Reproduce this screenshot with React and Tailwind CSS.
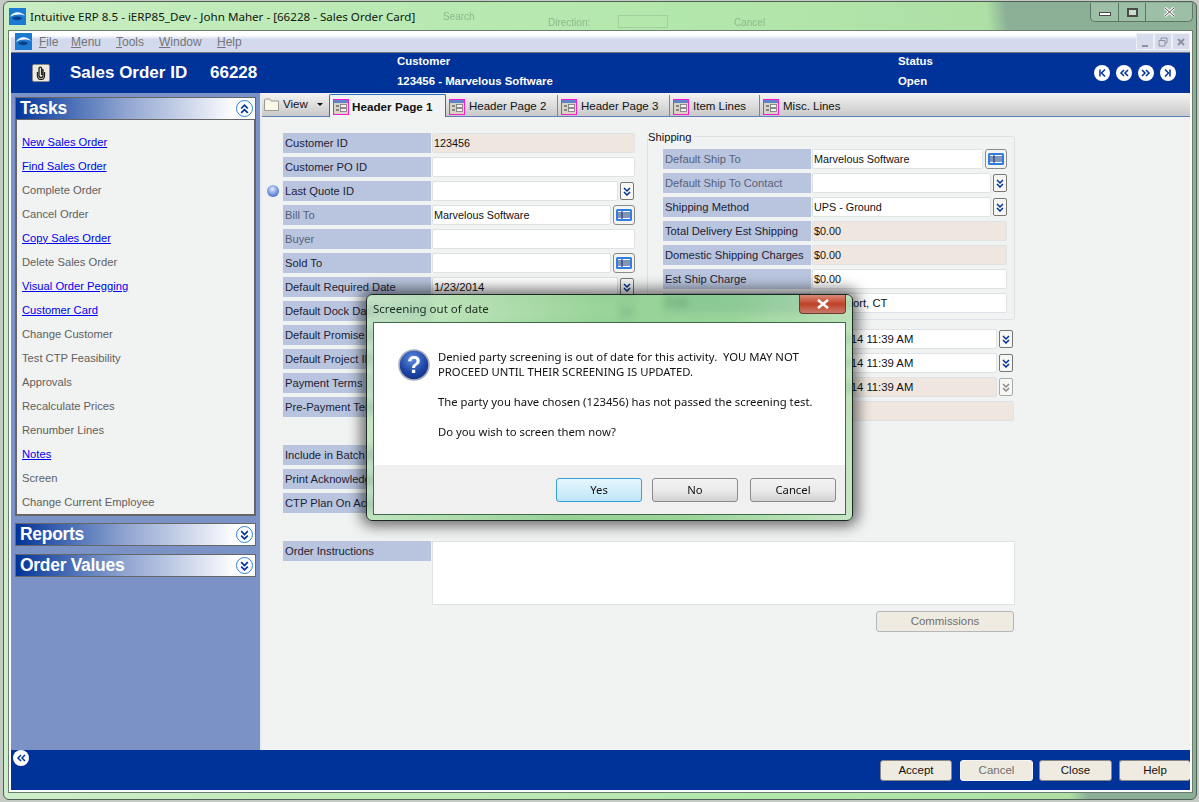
import React from "react";

const tasks = [
  ["New Sales Order", true],
  ["Find Sales Order", true],
  ["Complete Order", false],
  ["Cancel Order", false],
  ["Copy Sales Order", true],
  ["Delete Sales Order", false],
  ["Visual Order Pegging", true],
  ["Customer Card", true],
  ["Change Customer", false],
  ["Test CTP Feasibility", false],
  ["Approvals", false],
  ["Recalculate Prices", false],
  ["Renumber Lines", false],
  ["Notes", true],
  ["Screen", false],
  ["Change Current Employee", false],
];

const Logo = () => (
  <svg width="17" height="17" viewBox="0 0 17 17" className="shrink-0">
    <rect width="17" height="17" fill="#1c7ad2" />
    <path d="M1 9 C4 3 12 3 16 8 C12 6 6 6 1 9 Z" fill="#fff" />
    <path d="M3 10 C6 8 10 8 13 10 C11 13 6 13 3 10 Z" fill="#0b3f86" />
  </svg>
);

// double chevron used all over the app
const Chevrons = ({ dir = "down", color = "#003399", size = 10 }) => {
  const paths = {
    down: ["M2 2 L5 5 L8 2", "M2 6 L5 9 L8 6"],
    up: ["M2 5 L5 2 L8 5", "M2 9 L5 6 L8 9"],
    left: ["M5 2 L2 5 L5 8", "M9 2 L6 5 L9 8"],
    right: ["M1 2 L4 5 L1 8", "M5 2 L8 5 L5 8"],
    first: ["M3 1.5 L3 8.5", "M8 1.5 L4.5 5 L8 8.5"],
    last: ["M7 1.5 L7 8.5", "M2 1.5 L5.5 5 L2 8.5"],
  };
  return (
    <svg width={size} height={size} viewBox="0 0 10 10">
      {paths[dir].map((d) => (
        <path key={d} d={d} fill="none" stroke={color} strokeWidth="1.5" />
      ))}
    </svg>
  );
};

const NavCircle = ({ dir }) => (
  <span className="flex h-[16px] w-[16px] items-center justify-center rounded-full bg-white">
    <Chevrons dir={dir} />
  </span>
);

const SectionCircle = ({ dir }) => (
  <span className="flex h-[17px] w-[17px] items-center justify-center rounded-full border border-[#2f7fd6] bg-white">
    <Chevrons dir={dir} size={11} />
  </span>
);

const TabIcon = () => (
  <svg width="16" height="16" viewBox="0 0 16 16" className="shrink-0">
    <rect x="0.5" y="0.5" width="15" height="15" fill="#d8d5c8" stroke="#ff19d0" />
    <rect x="1" y="1" width="14" height="3" fill="#5f86c8" />
    <path d="M3 7 H6 M3 11 H6" stroke="#6a6a6a" strokeWidth="1.5" />
    <rect x="7.5" y="5.5" width="6" height="3" fill="#f4f4ee" stroke="#777" strokeWidth="0.8" />
    <rect x="7.5" y="9.5" width="6" height="3" fill="#f4f4ee" stroke="#777" strokeWidth="0.8" />
  </svg>
);

const FolderIcon = () => (
  <svg width="16" height="14" viewBox="0 0 16 14" className="shrink-0">
    <path d="M0.5 2 L0.5 12.5 L14.5 12.5 L14.5 3 L7 3 L5.5 1 L1.5 1 Z" fill="#fbf8e8" stroke="#9a9a90" />
  </svg>
);

const LookupButton = () => (
  <button className="flex h-[20px] w-[22px] shrink-0 items-center justify-center rounded-[3px] border border-[#8a8a8a] bg-[#f4f4f0]">
    <svg width="16" height="12" viewBox="0 0 16 12">
      <rect width="16" height="12" rx="1.5" fill="#2f7de0" />
      <rect x="2" y="2" width="12" height="8" fill="#fff" />
      <path d="M2 4 H14 M2 6 H14 M2 8 H14 M6 2 V10" stroke="#0a2a70" strokeWidth="1" />
    </svg>
  </button>
);

const ComboButton = ({ disabled }) => (
  <button
    className={`flex h-[18px] w-[14px] shrink-0 items-center justify-center self-center rounded-[2px] border bg-[#f7f7f4] ${
      disabled ? "border-[#aaaaaa]" : "border-[#777777]"
    }`}
  >
    <Chevrons dir="down" color={disabled ? "#8a8a8a" : "#003399"} />
  </button>
);

const Field = ({ value, tan, date, className = "" }) => (
  <div
    className={`flex h-[20px] items-center overflow-hidden whitespace-nowrap rounded-[2px] border border-[#dfe3e6] pl-[1px] text-[#111] ${
      date ? "text-[11.3px]" : "text-[10.8px]"
    } ${tan ? "bg-[#efe7df]" : "bg-white"} ${className}`}
  >
    {value}
  </div>
);

const widths = {
  left: { none: "w-[203px]", combo: "w-[186px]", "combo-off": "w-[186px]", lookup: "w-[179px]" },
  ship: { none: "w-[195px]", combo: "w-[179px]", lookup: "w-[171px]" },
};

// one label + control row
const Row = ({ label, value, tan, dim, date, kind = "none", set = "left", marker, slot = true }) => (
  <div className="flex h-[20px] items-center">
    {slot && <div className="flex w-[17px] shrink-0 items-center">{marker}</div>}
    <div
      className={`flex h-[20px] w-[148px] shrink-0 items-center overflow-hidden whitespace-nowrap bg-[#b9c5de] pl-[2px] ${
        dim ? "text-[#55607a]" : "text-[#1d2236]"
      }`}
    >
      {label}
    </div>
    <div className="ml-[1px] flex h-[20px] items-center gap-[2px]">
      <Field value={value} tan={tan} date={date} className={widths[set][kind]} />
      {kind === "combo" && <ComboButton />}
      {kind === "combo-off" && <ComboButton disabled />}
      {kind === "lookup" && <LookupButton />}
    </div>
  </div>
);

const Sphere = () => (
  <span className="ml-[1px] block h-[12px] w-[12px] rounded-full bg-[radial-gradient(circle_at_45%_35%,#e4ecff,#6d8fdc_55%,#2f4fa8)]" />
);

const SectionHeader = ({ title, dir }) => (
  <div className="flex h-[23px] items-center justify-between border border-[#666] bg-linear-to-r from-[#003399] via-[#8ea3cf] via-45% to-white to-[92%] pl-[4px] pr-[2px]">
    <span className="text-[17.5px] font-bold tracking-[-0.3px] text-white">{title}</span>
    <SectionCircle dir={dir} />
  </div>
);

const Tab = ({ label, w }) => (
  <div className={`flex h-[22px] items-center gap-[4px] border-r border-[#4a90e2] pl-[3px] text-[11.5px] text-[#111] ${w}`}>
    <TabIcon />
    <span>{label}</span>
  </div>
);

const FooterButton = ({ label, disabled, className }) => (
  <button
    className={`h-[21px] rounded-[3px] border bg-[#efebe0] text-[11.5px] ${className} ${
      disabled ? "border-[#f4f4f4] text-[#6f6f6f]" : "border-[#888] text-[#111]"
    }`}
  >
    {label}
  </button>
);

const DialogButton = ({ label, primary, className = "" }) => (
  <button
    className={`h-[24px] w-[86px] rounded-[3px] border text-[#111] ${className} ${
      primary
        ? "border-[#3a9fd8] bg-linear-to-b from-[#e6f6fd] to-[#bfe6f8]"
        : "border-[#8a8a8a] bg-linear-to-b from-[#f4f4f4] via-[#ebebeb] to-[#d2d2d2]"
    }`}
  >
    {label}
  </button>
);

const QuestionIcon = () => (
  <svg width="32" height="32" viewBox="0 0 32 32" className="shrink-0">
    <defs>
      <radialGradient id="q" cx="45%" cy="30%" r="75%">
        <stop offset="0%" stopColor="#5f8fe0" />
        <stop offset="60%" stopColor="#1f46a8" />
        <stop offset="100%" stopColor="#122f80" />
      </radialGradient>
    </defs>
    <circle cx="16" cy="16" r="15" fill="url(#q)" stroke="#a8aeb8" strokeWidth="1.6" />
    <text x="16" y="24" textAnchor="middle" fontSize="23" fontWeight="bold" fontFamily="Liberation Sans, sans-serif" fill="#fff">
      ?
    </text>
  </svg>
);

const Dialog = () => (
  <div className="absolute left-[366px] top-[294px] flex h-[227px] w-[487px] flex-col rounded-[6px] border border-[#1c2822] bg-[linear-gradient(100deg,rgba(190,228,185,0.75),rgba(120,198,120,0.75)_45%,rgba(125,202,125,0.75)_70%,rgba(185,225,180,0.75))] px-[6px] pb-[5px] font-['Noto_Sans',sans-serif] text-[11.3px] text-[#111] shadow-[0_0_14px_5px_rgba(0,0,0,0.55)] backdrop-blur-[3px]">
    <div className="flex h-[27px] shrink-0 items-start justify-between">
      <span className="pt-[5px] text-[11.5px] text-[#1c2b20]">Screening out of date</span>
      <span className="flex h-[19px] w-[47px] items-center justify-center rounded-b-[4px] border border-t-0 border-[#6d3a30] bg-linear-to-b from-[#d98a78] via-[#bf3f26] to-[#c9796a]">
        <svg width="14" height="10" viewBox="0 0 14 10">
          <path d="M2 1 L12 9 M12 1 L2 9" stroke="#fff" strokeWidth="2.6" />
        </svg>
      </span>
    </div>
    <div className="flex min-h-0 flex-1 flex-col border border-[#3e6b46] bg-white">
      <div className="flex h-[142px] gap-[8px] pl-[24px] pt-[26px]">
        <QuestionIcon />
        <div className="leading-[15px]">
          <p className="whitespace-pre">Denied party screening is out of date for this activity.  YOU MAY NOT</p>
          <p className="mb-[15px]">PROCEED UNTIL THEIR SCREENING IS UPDATED.</p>
          <p className="mb-[15px]">The party you have chosen (123456) has not passed the screening test.</p>
          <p>Do you wish to screen them now?</p>
        </div>
      </div>
      <div className="flex flex-1 items-start justify-end gap-[10px] bg-[#f0f0f0] pr-[9px] pt-[13px]">
        <DialogButton label="Yes" primary />
        <DialogButton label="No" />
        <DialogButton label="Cancel" className="ml-[2px]" />
      </div>
    </div>
  </div>
);

export default function App() {
  return (
    <div className="relative h-[802px] w-[1199px] overflow-hidden bg-[#c4cac4] pb-[2px] pl-[3px] pr-[2px] pt-[1px] font-['Liberation_Sans',sans-serif] text-[11.2px]">
      {/* aero window */}
      <div className="flex h-full flex-col rounded-[6px] border border-[#4f6055] bg-[linear-gradient(84deg,#cdeec8_0%,#bdeab6_30%,#b2e7ab_60%,#aee0a6_83.5%,#8cb096_85%,#8cb096_100%)] pb-[6px] pl-[4px] pr-[3px]">
        {/* title bar */}
        <div className="relative flex h-[28px] shrink-0 items-start justify-between">
          {/* window behind the glass, barely showing through */}
          <div className="absolute left-[435px] top-[7px] select-none text-[10px] text-[#8cb98c] blur-[0.4px]">Search</div>
          <div className="absolute left-[540px] top-[13px] select-none text-[10px] text-[#8cb98c] blur-[0.4px]">Direction:</div>
          <div className="absolute left-[610px] top-[13px] h-[13px] w-[50px] border border-[#a2cf9e]" />
          <div className="absolute left-[726px] top-[13px] select-none text-[10px] text-[#8cb98c] blur-[0.4px]">Cancel</div>
          <div className="relative flex items-center gap-[4px] pl-[1px] pt-[6px] font-['Noto_Sans',sans-serif] text-[11.6px] text-[#101810]">
            <Logo />
            <span>Intuitive ERP 8.5 - iERP85_Dev - John Maher - [66228 - Sales Order Card]</span>
          </div>
          <div className="relative mt-[1px] flex h-[19px] w-[103px] overflow-hidden rounded-b-[5px] border border-t-0 border-[#5d7566] bg-[#9dbfa5]">
            <span className="flex w-[28px] items-end justify-center border-r border-[#5d7566] pb-[5px]">
              <span className="h-[4px] w-[12px] border border-[#4a4a4a] bg-white" />
            </span>
            <span className="flex w-[27px] items-center justify-center border-r border-[#5d7566]">
              <span className="h-[9px] w-[11px] border-2 border-[#4a4a4a] bg-[#c8dccb]" />
            </span>
            <span className="flex flex-1 items-center justify-center">
              <svg width="13" height="10" viewBox="0 0 13 10">
                <path d="M2 1 L11 9 M11 1 L2 9" stroke="#fff" strokeWidth="3" />
                <path d="M2 1 L11 9 M11 1 L2 9" stroke="#555" strokeWidth="1" />
              </svg>
            </span>
          </div>
        </div>

        {/* mdi frame */}
        <div className="flex min-h-0 flex-1 flex-col border border-[#6c7d72] bg-white px-[2px] pb-[2px]">
          {/* menu bar */}
          <div className="flex h-[22px] shrink-0 items-center justify-between border-b border-[#777] bg-linear-to-b from-white from-20% to-[#d3daee] to-40% text-[12px] text-[#767676]">
            <div className="flex items-center">
              <div className="ml-[4px] w-[24px]">
                <Logo />
              </div>
              <span className="w-[32px]"><u>F</u>ile</span>
              <span className="w-[45px]"><u>M</u>enu</span>
              <span className="w-[43px]"><u>T</u>ools</span>
              <span className="w-[58px]"><u>W</u>indow</span>
              <span><u>H</u>elp</span>
            </div>
            <div className="flex">
              {["min", "restore", "close"].map((b) => (
                <span key={b} className="flex h-[17px] w-[18px] items-center justify-center border border-[#eef0f6] bg-[#d7dcec] text-[#8a93a3]">
                  {b === "min" && <span className="mt-[8px] h-[2px] w-[6px] bg-[#8a93a3]" />}
                  {b === "restore" && (
                    <svg width="10" height="10" viewBox="0 0 10 10">
                      <path d="M3 3 V1 H9 V6 H7 M1 3.5 H7 V9 H1 Z" fill="none" stroke="#8a93a3" />
                    </svg>
                  )}
                  {b === "close" && (
                    <svg width="10" height="10" viewBox="0 0 10 10">
                      <path d="M2 2 L8 8 M8 2 L2 8" stroke="#8a93a3" strokeWidth="2" />
                    </svg>
                  )}
                </span>
              ))}
            </div>
          </div>

          {/* blue header */}
          <div className="flex h-[40px] shrink-0 items-center bg-[#003399] pl-[21px] text-[11.4px] text-white">
            <span className="flex h-[18px] w-[18px] shrink-0 items-center justify-center rounded-[2px] border border-[#888] bg-[#eeeadf]">
              <svg width="10" height="14" viewBox="0 0 10 14">
                <path d="M7 3 V9.5 A2 2 0 0 1 3 9.5 V2.5 A1.3 1.3 0 0 1 5.6 2.5 V9" fill="none" stroke="#222" strokeWidth="1.3" />
                <path d="M1.5 6 V10 A3.5 3.5 0 0 0 8.5 10 V6" fill="none" stroke="#222" strokeWidth="1.3" />
              </svg>
            </span>
            <span className="ml-[20px] w-[140px] shrink-0 text-[17px] font-bold">Sales Order ID</span>
            <span className="w-[187px] shrink-0 text-[17px] font-bold">66228</span>
            <div className="w-[501px] shrink-0 pb-[4px] font-bold leading-[20px]">
              <div>Customer</div>
              <div>123456 - Marvelous Software</div>
            </div>
            <div className="w-[196px] shrink-0 pb-[4px] font-bold leading-[20px]">
              <div>Status</div>
              <div>Open</div>
            </div>
            <div className="flex gap-[6px]">
              <NavCircle dir="first" />
              <NavCircle dir="left" />
              <NavCircle dir="right" />
              <NavCircle dir="last" />
            </div>
          </div>

          {/* body */}
          <div className="flex min-h-0 flex-1">
            {/* task sidebar */}
            <aside className="flex w-[249px] shrink-0 flex-col bg-[#7a92c6] px-[4px] pt-[4px]">
              <SectionHeader title="Tasks" dir="up" />
              <div className="h-[396px] border-x-2 border-b-2 border-[#666] bg-[#f1f3f2] pl-[5px] pt-[10px]">
                {tasks.map(([name, link]) => (
                  <div key={name} className="flex h-[24px] items-center">
                    <span className={link ? "text-[#0000ee] underline" : "text-[#606060]"}>{name}</span>
                  </div>
                ))}
              </div>
              <div className="mt-[7px]">
                <SectionHeader title="Reports" dir="down" />
              </div>
              <div className="mt-[8px]">
                <SectionHeader title="Order Values" dir="down" />
              </div>
            </aside>

            {/* page */}
            <div className="flex min-w-0 flex-1 flex-col border-l-2 border-[#e8ecf2] bg-[#f1f3f2]">
              {/* tab strip */}
              <div className="flex h-[24px] shrink-0 items-start border-b border-[#5f7fb5] bg-linear-to-b from-[#f4f4f4] to-[#c9c9c9] pt-[1px]">
                <div className="flex h-[20px] w-[67px] shrink-0 items-center gap-[3px] pl-[2px] pt-[1px] text-[11.5px] text-[#111]">
                  <FolderIcon />
                  <span>View</span>
                  <span className="ml-[6px] h-0 w-0 border-x-[3px] border-t-[3px] border-x-transparent border-t-[#111]" />
                </div>
                <div className="z-10 flex h-[23px] w-[117px] shrink-0 items-center gap-[3px] rounded-t-[2px] border border-b-0 border-[#2a6fc0] bg-[#f1f3f2] pl-[3px] pt-[2px] text-[11.7px] font-bold text-[#111]">
                  <TabIcon />
                  <span>Header Page 1</span>
                </div>
                <div className="flex pt-[1px]">
                  <Tab label="Header Page 2" w="w-[112px] pt-[1px]" />
                  <Tab label="Header Page 3" w="w-[112px] pt-[1px]" />
                  <Tab label="Item Lines" w="w-[90px] pt-[1px]" />
                  <div className="flex h-[22px] items-center gap-[4px] pl-[3px] pt-[1px] text-[11.5px] text-[#111]">
                    <TabIcon />
                    <span>Misc. Lines</span>
                  </div>
                </div>
              </div>

              {/* form */}
              <div className="flex flex-col pl-[4px] pt-[16px]">
                <div className="flex">
                  <div className="flex w-[369px] shrink-0 flex-col gap-[4px]">
                    <Row label="Customer ID" value="123456" tan />
                    <Row label="Customer PO ID" />
                    <Row label="Last Quote ID" kind="combo" marker={<Sphere />} />
                    <Row label="Bill To" dim value="Marvelous Software" kind="lookup" />
                    <Row label="Buyer" dim />
                    <Row label="Sold To" kind="lookup" />
                    <Row label="Default Required Date" value="1/23/2014" date kind="combo" />
                    <Row label="Default Dock Date" kind="combo" />
                    <Row label="Default Promise Date" kind="combo" />
                    <Row label="Default Project ID" />
                    <Row label="Payment Terms" />
                    <Row label="Pre-Payment Terms" />
                    <div className="h-[20px]" />
                    <Row label="Include in Batch Release" />
                    <Row label="Print Acknowledgement" />
                    <Row label="CTP Plan On Accept" />
                  </div>

                  <div className="ml-[12px] flex w-[368px] shrink-0 flex-col pt-[3px]">
                    <div className="relative flex h-[184px] flex-col gap-[4px] rounded-[3px] border border-[#dde1e6] pl-[15px] pt-[12px]">
                      <span className="absolute -top-[8px] left-0 bg-[#f1f3f2] pr-[2px] text-[#111]">Shipping</span>
                      <Row slot={false} set="ship" label="Default Ship To" dim value="Marvelous Software" kind="lookup" />
                      <Row slot={false} set="ship" label="Default Ship To Contact" dim kind="combo" />
                      <Row slot={false} set="ship" label="Shipping Method" value="UPS - Ground" kind="combo" />
                      <Row slot={false} set="ship" label="Total Delivery Est Shipping" value="$0.00" tan />
                      <Row slot={false} set="ship" label="Domestic Shipping Charges" value="$0.00" tan />
                      <Row slot={false} set="ship" label="Est Ship Charge" value="$0.00" />
                      <Row slot={false} set="ship" label="FOB" value="Bridgeport, CT" date />
                    </div>
                    <div className="mt-[9px] flex flex-col gap-[4px] pl-[15px]">
                      <Row slot={false} value="1/23/2014 11:39 AM" date kind="combo" />
                      <Row slot={false} value="1/23/2014 11:39 AM" date kind="combo" />
                      <Row slot={false} value="1/23/2014 11:39 AM" date tan kind="combo-off" />
                      <Row slot={false} tan />
                    </div>
                  </div>
                </div>

                <div className="mt-[28px] flex pl-[17px]">
                  <div className="flex h-[20px] w-[148px] shrink-0 items-center bg-[#b9c5de] pl-[2px] text-[#1d2236]">
                    Order Instructions
                  </div>
                  <div className="ml-[1px] h-[64px] w-[583px] border border-[#dfe3e6] bg-white" />
                </div>
                <div className="mt-[6px] pl-[610px]">
                  <button className="h-[21px] w-[138px] rounded-[3px] border border-[#b4b8bc] bg-[#efebe0] text-[11.4px] text-[#6f6f6f]">
                    Commissions
                  </button>
                </div>
              </div>
            </div>
          </div>

          {/* footer */}
          <div className="flex h-[40px] shrink-0 items-start justify-between bg-[#003399] pl-[2px]">
            <NavCircle dir="left" />
            <div className="flex pt-[10px]">
              <FooterButton label="Accept" className="mr-[8px] w-[72px]" />
              <FooterButton label="Cancel" disabled className="mr-[6px] w-[73px]" />
              <FooterButton label="Close" className="mr-[7px] w-[73px]" />
              <FooterButton label="Help" className="w-[71px] border-r-0" />
            </div>
          </div>
        </div>
      </div>

      <Dialog />
    </div>
  );
}
